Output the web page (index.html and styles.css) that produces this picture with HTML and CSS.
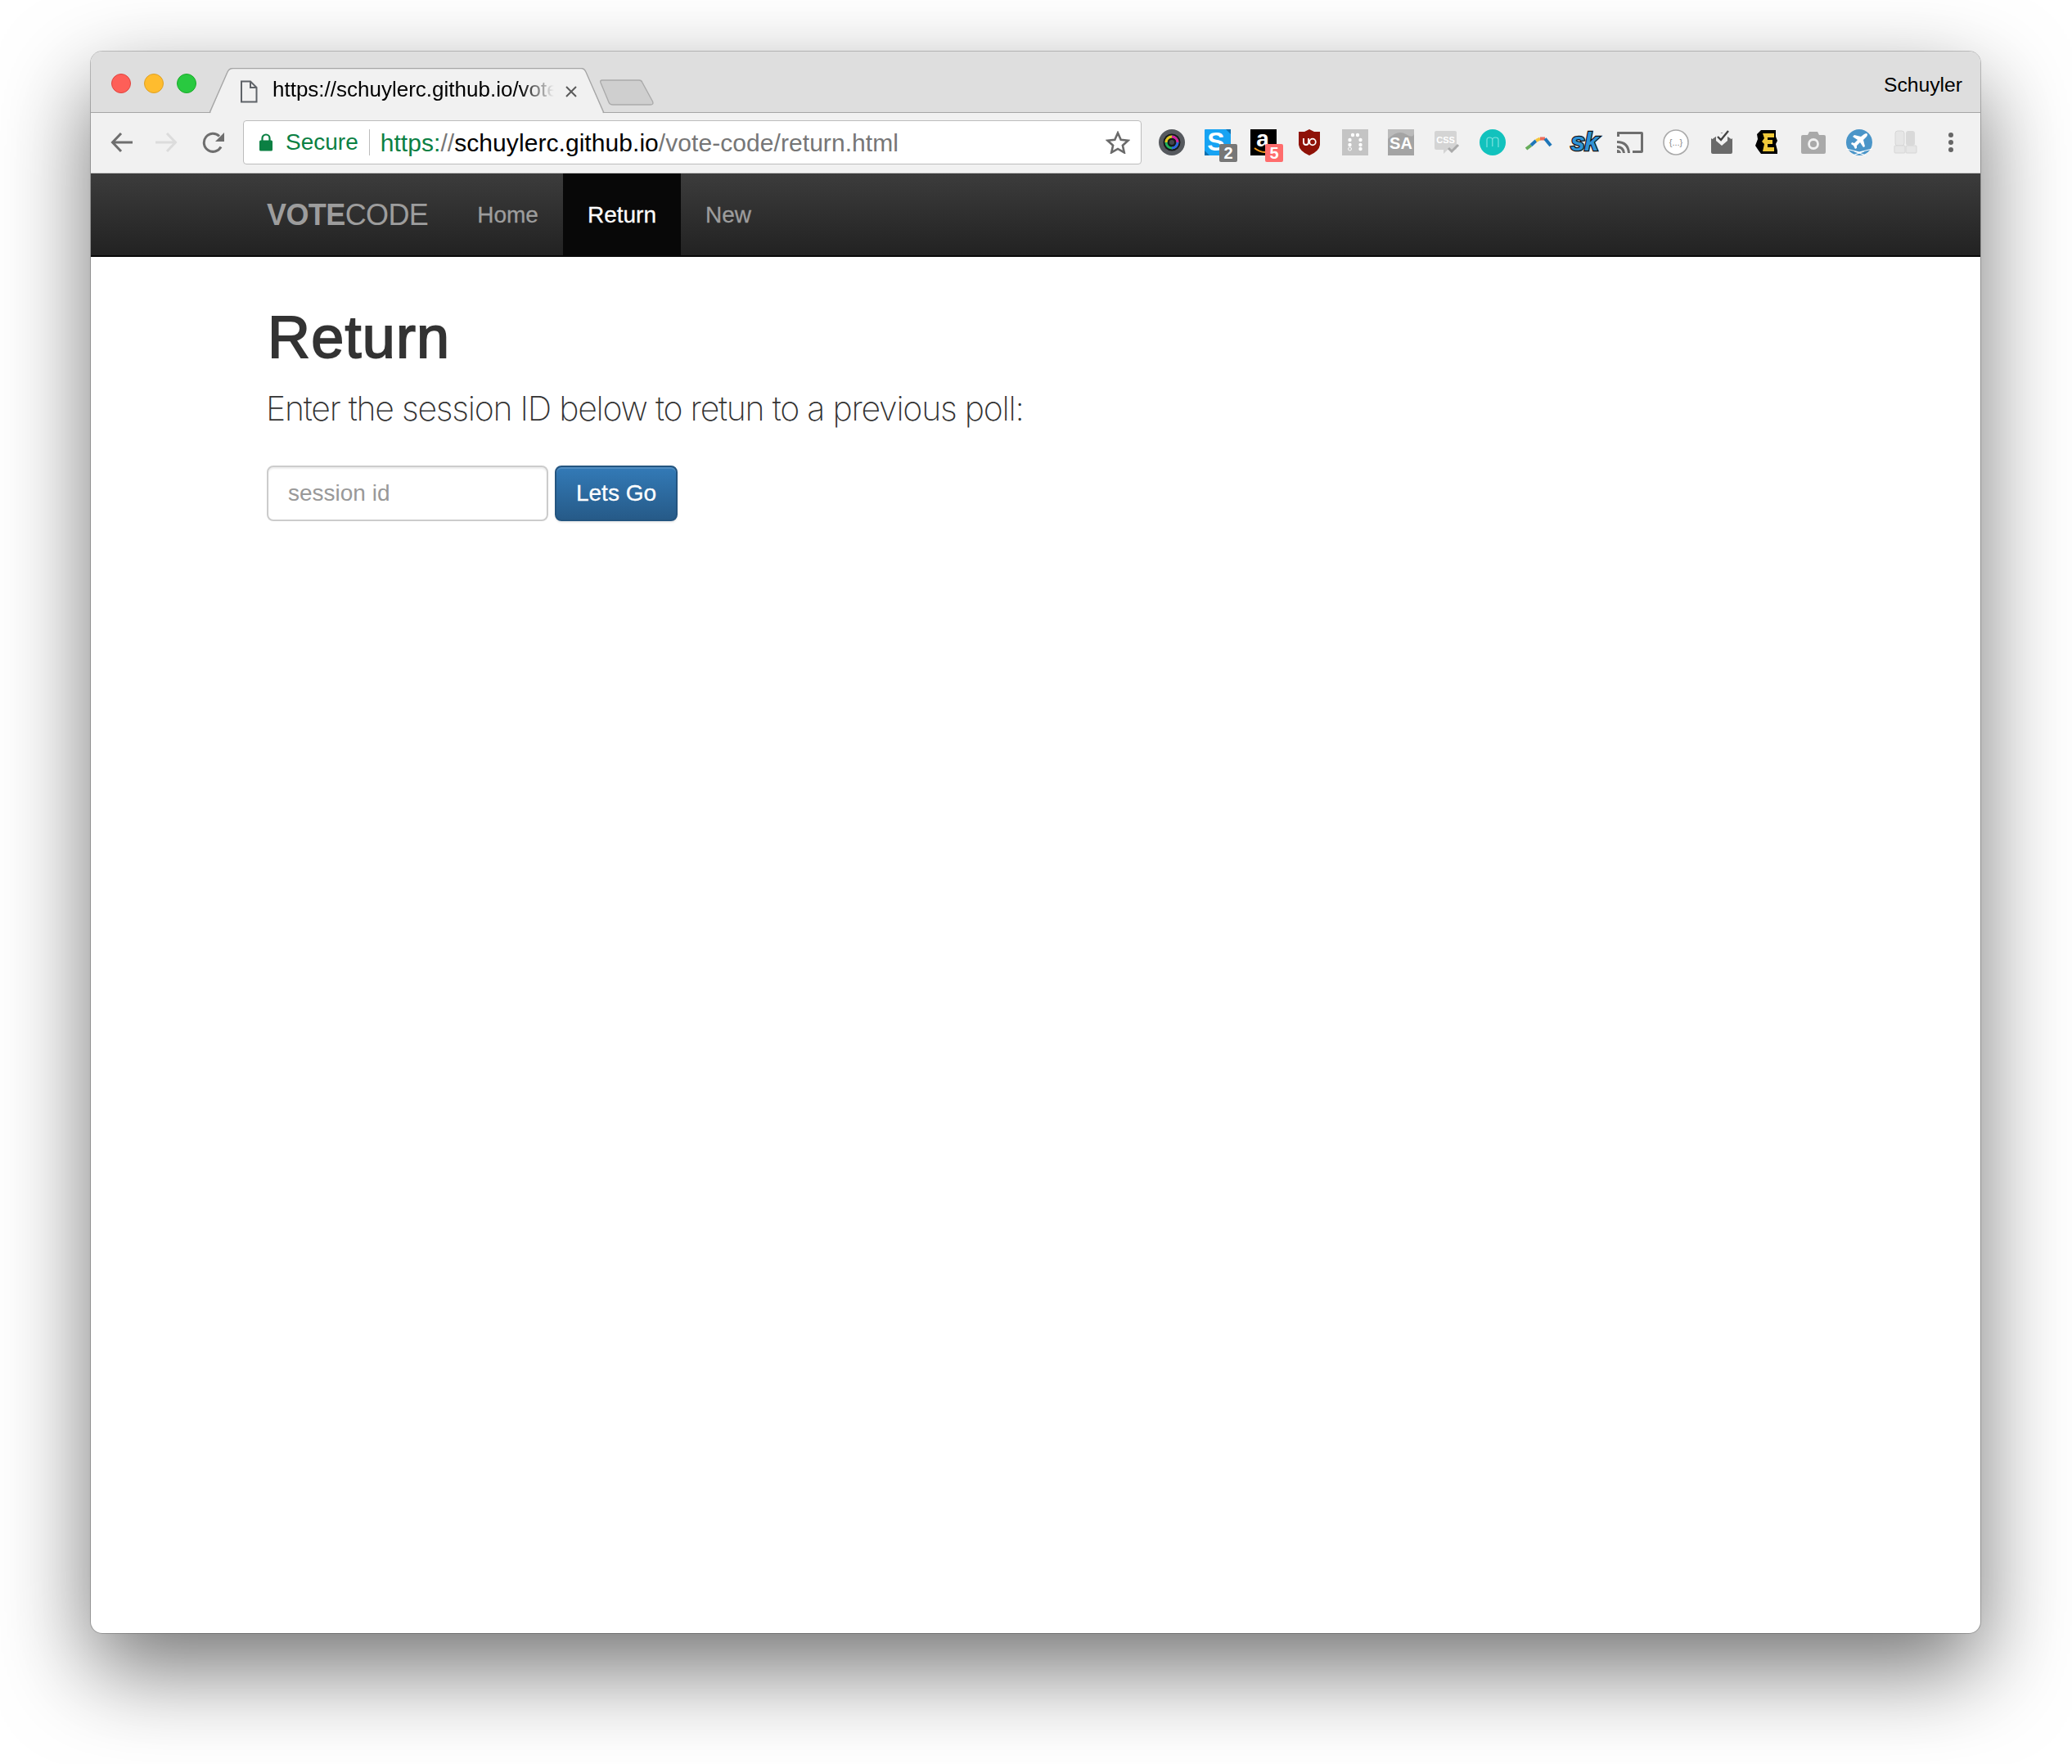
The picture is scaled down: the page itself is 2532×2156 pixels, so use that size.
FILE: index.html
```html
<!DOCTYPE html>
<html lang="en">
<head>
<meta charset="utf-8">
<title>VoteCode</title>
<link rel="stylesheet" href="styles.css">
</head>
<body>
<div class="window">
  <div class="tabstrip">
    <div class="lights">
      <span class="light red"></span><span class="light amber"></span><span class="light green"></span>
    </div>
    <div class="tab">
      <svg class="tab-shape" width="484" height="56" viewBox="0 0 484 56"><path d="M0 55.5H1L22 5Q24 .5 29 .5H454Q458 .5 460 5L481 55.5H484V56H0Z" fill="#f1f1f1"/><path d="M0 55L22 5Q24 .5 29 .5H454Q458 .5 460 5L482 55" fill="none" stroke="#a6a6a6" stroke-width="1.4"/></svg>
      <svg class="tab-icon" width="22" height="28" viewBox="0 0 22 28"><path d="M2 1.5H13L20.500 9V26.500H2ZM13 1.500V9H20.500" fill="none" stroke="#5f6368" stroke-width="2"/></svg>
      <span class="tab-title">https://schuylerc.github.io/vote-code/return.html</span>
      <svg class="tab-close" width="16" height="16" viewBox="0 0 16 16"><path d="M2 2L14 14M14 2L2 14" stroke="#5a5a5a" stroke-width="2"/></svg>
    </div>
    <svg class="newtab" width="66" height="32" viewBox="0 0 66 32"><path d="M3 1H48Q51 1 52 4L64.500 27Q66 31 62 31H16Q12 31 11 28L1 4Q0 1 3 1Z" fill="#cfcfcf" stroke="#ababab" stroke-width="1.400"/></svg>
    <span class="profile">Schuyler</span>
  </div>

  <div class="toolbar">
    <svg class="nav-icon" width="28" height="26" viewBox="0 0 28 26"><path d="M27 13H3M13 2L2.500 13L13 24" fill="none" stroke="#6e6e6e" stroke-width="3"/></svg>
    <svg class="nav-icon" width="28" height="26" viewBox="0 0 28 26"><path d="M1 13H25M15 2L25.500 13L15 24" fill="none" stroke="#dcdcdc" stroke-width="3"/></svg>
    <svg class="nav-icon" width="28" height="28" viewBox="0 0 28 28"><path d="M23 19.500A11 11 0 1 1 21 6.500" fill="none" stroke="#6e6e6e" stroke-width="3"/><path d="M27 2V13H16Z" fill="#6e6e6e"/></svg>

    <div class="omnibox">
      <svg class="lock" width="18" height="22" viewBox="0 0 18 22"><path d="M4.500 9V6A4.500 4.500 0 0 1 13.500 6V9" fill="none" stroke="#0b8043" stroke-width="2.200"/><rect x="1" y="8.500" width="16" height="13" rx="1.500" fill="#0b8043"/></svg>
      <span class="secure">Secure</span>
      <span class="url"><span class="scheme">https:</span><span class="path">//</span><span class="host">schuylerc.github.io</span><span class="path">/vote-code/return.html</span></span>
      <svg class="star" width="30" height="28" viewBox="0 0 30 28"><path d="M15 2.500L18.700 10.800L27.500 11.700L20.900 17.700L22.800 26.400L15 21.900L7.200 26.400L9.100 17.700L2.500 11.700L11.300 10.800Z" fill="none" stroke="#6a6a6a" stroke-width="2.600"/></svg>
    </div>

    <div class="extensions">
      <span class="ext"><svg width="32" height="32" viewBox="0 0 32 32"><circle cx="16" cy="16" r="16" fill="#56595e"/><circle cx="16" cy="16" r="10.500" fill="#17181a"/><g fill="none" stroke-width="3"><circle cx="16" cy="16" r="7" stroke="#1fb25a"/><path d="M16 9A7 7 0 0 1 23 16" stroke="#d71fa0"/><path d="M23 16A7 7 0 0 1 16 23" stroke="#2f63e0"/><path d="M9 16A7 7 0 0 1 16 9" stroke="#e7c21c"/></g><circle cx="16" cy="16" r="3" fill="#44484c"/></svg></span>
      <span class="ext"><svg width="40" height="40" viewBox="0 0 40 40" class="badged"><rect width="32" height="32" rx="1" fill="#17a3f3"/><path d="M26 0L32 6V32H6L0 26V32H32V0Z" fill="#0e6fae"/><text x="14" y="26" class="ico-bold s30 mid" fill="#fff">S</text><rect x="18" y="18" width="22" height="22" rx="2" fill="#777"/><text x="29" y="36" class="ico-bold s20 mid" fill="#fff">2</text></svg></span>
      <span class="ext"><svg width="40" height="40" viewBox="0 0 40 40" class="badged"><rect width="32" height="32" fill="#000"/><text x="15" y="21" class="ico-bold s28 mid" fill="#fff">a</text><path d="M5 23Q14 30 22 27" fill="none" stroke="#f19a1f" stroke-width="2"/><rect x="18" y="18" width="22" height="22" rx="2" fill="#ff6c6c"/><text x="29" y="36" class="ico-bold s20 mid" fill="#fff">5</text></svg></span>
      <span class="ext"><svg width="32" height="32" viewBox="0 0 32 32"><path d="M16 0L22 3H29V19Q28 27 16 32Q4 27 3 19V3H10Z" fill="#8f1208"/><path d="M9 11V16Q9 19 12 19T15 16V11" fill="none" stroke="#fff" stroke-width="1.800"/><circle cx="20" cy="15.500" r="3.800" fill="none" stroke="#fff" stroke-width="1.800"/></svg></span>
      <span class="ext"><svg width="32" height="32" viewBox="0 0 32 32"><rect width="32" height="32" fill="#c4c4c4"/><g fill="#fff"><circle cx="13" cy="7" r="2.200"/><circle cx="19" cy="7" r="2.200"/><circle cx="9.500" cy="13" r="2.200"/><circle cx="22.500" cy="13" r="2.200"/><circle cx="9.500" cy="19" r="2.200"/><circle cx="22.500" cy="19" r="2.200"/><circle cx="22.500" cy="24" r="2.200"/></g><circle cx="9.500" cy="24" r="2" fill="none" stroke="#fff"/></svg></span>
      <span class="ext"><svg width="32" height="32" viewBox="0 0 32 32"><rect width="32" height="32" fill="#a4a4a4"/><path d="M0 12Q12 0 22 6T32 4V0H0Z" fill="#bbb"/><text x="16" y="24" class="ico-bold s20 mid" fill="#fff">SA</text></svg></span>
      <span class="ext"><svg width="32" height="32" viewBox="0 0 32 32"><rect x="1" y="2" width="27" height="23" rx="2" fill="#d4d4d4"/><path d="M12 25H17L12 30Z" fill="#d4d4d4"/><text x="14.500" y="17" class="ico-bold s11 mid" fill="#fff">CSS</text><path d="M18 23L22 27L30 19" fill="none" stroke="#aaa" stroke-width="3"/></svg></span>
      <span class="ext"><svg width="32" height="32" viewBox="0 0 32 32"><circle cx="16" cy="16" r="16" fill="#12c2bd"/><path d="M9 22V13Q9 10 12.300 10T15.800 13V21M15.800 13Q15.800 10 19.500 10T23 13V22" fill="none" stroke="#7fe3df" stroke-width="1.200"/></svg></span>
      <span class="ext"><svg width="32" height="32" viewBox="0 0 32 32"><g fill="none" stroke-width="4"><path d="M1 24L7 19.500" stroke="#67ad5b"/><path d="M7 19.500L13 14" stroke="#1e76b8"/><path d="M13 14L18 11.500" stroke="#f5c33a"/><path d="M18 11.500L24 11.500" stroke="#ee6c5a"/><path d="M24 11.500L31 20" stroke="#1e76b8"/></g></svg></span>
      <span class="ext"><svg width="32" height="32" viewBox="0 0 32 32"><text x="16" y="26" class="ico-sk mid">sk</text></svg></span>
      <span class="ext"><svg width="32" height="32" viewBox="0 0 32 32"><path d="M0 3.500Q0 3 1 3H30Q32 3 32 5V27Q32 29 30 29H19V26H29V6H3V9H0Z" fill="#6e6e6e"/><path d="M0 14Q15 14 16 29H13Q12 17 0 17ZM0 20Q9 20 10 29H7Q6 23 0 23ZM0 25Q4 25 5 29H0Z" fill="#6e6e6e"/></svg></span>
      <span class="ext"><svg width="32" height="32" viewBox="0 0 32 32"><circle cx="16" cy="16" r="15" fill="#fff" stroke="#a9a9a9" stroke-width="1.600"/><text x="16" y="20" class="ico-reg s11 mid" fill="#8a8a8a">{...}</text></svg></span>
      <span class="ext"><svg width="32" height="32" viewBox="0 0 32 32"><path d="M3 13L16 4L29 13V28Q29 30 27 30H5Q3 30 3 28Z" fill="#6a6a6a"/><path d="M9 5H23V14L16 20L9 14Z" fill="#f1f1f1"/><path d="M3 13L16 23L29 13V11L16 21L3 11Z" fill="#6a6a6a"/><path d="M11 9L15 13L24 2" fill="none" stroke="#444" stroke-width="2.400"/></svg></span>
      <span class="ext"><svg width="32" height="32" viewBox="0 0 32 32"><path d="M8 1H26V9L28 14L26 18L28 26V30H8L5 26L1 20L4 12L3 6Z" fill="#000"/><path d="M10 5H24V10H16V13H22V18H16V22H24V27H10L12 18L9 15L12 11Z" fill="#f0c93a"/></svg></span>
      <span class="ext"><svg width="32" height="32" viewBox="0 0 32 32"><path d="M1 9Q1 7 3 7H9L11 3H21L23 7H29Q31 7 31 9V28Q31 30 29 30H3Q1 30 1 28Z" fill="#a9a9a9"/><circle cx="16" cy="18" r="5.500" fill="none" stroke="#f1f1f1" stroke-width="2.800"/></svg></span>
      <span class="ext"><svg width="32" height="32" viewBox="0 0 32 32"><circle cx="16" cy="16" r="16" fill="#4a95c8"/><path d="M25 5Q27 6 25 9L21 13L23 21L21 22L17 16L13 20V23L11 24L9 20L6 18L7 16L10 17L14 13L8 9L10 7L18 9L22 6Q24 5 25 5Z" fill="#fff"/><path d="M0 24L16 28L32 24M8 32L22 27M24 32L10 27" fill="none" stroke="#fff" stroke-width="1.200"/></svg></span>
      <span class="ext"><svg width="32" height="32" viewBox="0 0 32 32"><g fill="#e6e6e6" stroke="#d6d6d6"><rect x="4" y="2" width="11" height="18" rx="3"/><rect x="3" y="20" width="13" height="9" rx="1"/><rect x="17" y="20" width="13" height="9" rx="1"/></g><rect x="17" y="2" width="11" height="18" rx="3" fill="#d9d9d9"/></svg></span>
      <span class="ext"><svg width="32" height="32" viewBox="0 0 32 32"><g fill="#666"><circle cx="16" cy="7" r="3"/><circle cx="16" cy="16" r="3"/><circle cx="16" cy="25" r="3"/></g></svg></span>
    </div>
  </div>

  <nav class="navbar">
    <a class="brand"><b>VOTE</b>CODE</a>
    <a class="nav-link">Home</a>
    <a class="nav-link active">Return</a>
    <a class="nav-link">New</a>
  </nav>

  <main class="content">
    <h1 class="title">Return</h1>
    <p class="lead">Enter the session ID below to retun to a previous poll:</p>
    <form class="session-form">
      <input class="session-input" type="text" placeholder="session id">
      <button class="go" type="button">Lets Go</button>
    </form>
  </main>
</div>
</body>
</html>
```
FILE: styles.css
```css
* { box-sizing: border-box; }
html, body { margin: 0; padding: 0; background: #fff; }
body { height: 2156px; overflow: hidden; font-family: "Liberation Sans", Arial, sans-serif; padding: 63px 112px 0 111px; }

.window {
  display: flex;
  flex-direction: column;
  height: 1933px;
  border-radius: 14px;
  background: #fff;
  overflow: hidden;
  box-shadow: 0 44px 110px rgba(0,0,0,.55), 0 0 0 1px rgba(0,0,0,.22);
}
.tabstrip {
  position: relative;
  display: flex;
  align-items: flex-end;
  height: 75px;
  flex: none;
  background: #dedede;
  border-bottom: 1px solid #a6a6a6;
}
.lights { display: flex; gap: 16px; align-self: flex-start; padding: 27px 0 0 25px; width: 145px; }
.light { width: 24px; height: 24px; border-radius: 50%; border: 1px solid; flex: none; }
.red { background: #fe5f58; border-color: #e0443e; }
.amber { background: #ffbc2e; border-color: #dea123; }
.green { background: #29c940; border-color: #1aab29; }

.tab {
  position: relative;
  width: 484px;
  height: 55px;
  margin-bottom: -1px;
  display: flex;
  align-items: center;
  flex: none;
}
.tab-shape { position: absolute; left: 0; top: 0; }
.tab-icon { position: relative; margin-left: 37px; margin-top: 2px; }
.tab-title {
  position: relative;
  top: -1px;
  margin-left: 18px;
  width: 344px;
  overflow: hidden;
  white-space: nowrap;
  font-size: 26px;
  color: #000;
  -webkit-mask-image: linear-gradient(to right, #000 88%, transparent 100%);
  mask-image: linear-gradient(to right, #000 88%, transparent 100%);
}
.tab-close { position: relative; margin-left: 13px; margin-top: 2px; }
.newtab { align-self: flex-start; margin: 34px 0 0 -7px; }
.profile { margin-left: auto; align-self: flex-start; margin-top: 27px; margin-right: 22px; font-size: 24.700px; color: #000; }

.toolbar {
  display: flex;
  align-items: center;
  height: 74px;
  flex: none;
  padding: 0 8px 1px 0;
  background: #f1f1f1;
  border-bottom: 1px solid #c9c9c9;
}
.nav-icon { flex: none; margin-left: 24px; margin-right: 4px; }
.nav-icon + .nav-icon { margin-left: 22px; }
.nav-icon + .nav-icon + .nav-icon { margin-left: 26px; }
.omnibox {
  display: flex;
  align-items: center;
  width: 1098px;
  height: 54px;
  margin-left: 18px;
  flex: none;
  background: #fff;
  border: 1px solid #bcbcbc;
  border-radius: 4px;
}
.lock { margin-left: 18px; flex: none; }
.secure { margin-left: 15px; padding-right: 13px; font-size: 28px; color: #0b8043; border-right: 1px solid #bcbcbc; line-height: 32px; }
.url { margin-left: 13px; font-size: 30px; letter-spacing: .06px; white-space: nowrap; position: relative; top: 1px; }
.scheme { color: #0b8043; }
.host { color: #000; }
.path { color: #767676; }
.star { margin-left: auto; margin-right: 13px; }
.extensions { display: flex; margin-left: 9px; }
.ext { width: 56px; height: 32px; display: flex; justify-content: center; flex: none; }
.ext svg { overflow: visible; flex: none; }
.ext .badged { margin-right: -8px; }
.ico-bold { font-family: "Liberation Sans", sans-serif; font-weight: 700; }
.ico-reg { font-family: "Liberation Sans", sans-serif; }
.ico-sk { font-family: "Liberation Sans", sans-serif; font-weight: 700; font-style: italic; font-size: 32px; letter-spacing: -1px; fill: #2f93d6; stroke: #111; stroke-width: 2.500px; paint-order: stroke; }
.mid { text-anchor: middle; }
.s30 { font-size: 32px; }
.s28 { font-size: 28px; }
.s20 { font-size: 20px; }
.s11 { font-size: 11px; }

.navbar {
  display: flex;
  align-items: stretch;
  height: 102px;
  flex: none;
  padding-left: 185px;
  background: linear-gradient(to bottom, #3c3c3c, #222);
  border-bottom: 2px solid #080808;
  font-size: 28px;
}
.brand { padding: 0 30px; line-height: 102px; font-size: 36px; letter-spacing: -.6px; color: #9d9d9d; }
.nav-link { padding: 0 30px; line-height: 101px; color: #9d9d9d; -webkit-text-stroke: .3px currentColor; }
.nav-link.active { color: #fff; background: #080808; }

.content { display: flex; flex-direction: column; align-items: flex-start; padding: 59px 0 0 214px; flex: 1; color: #333; }
.title { margin: 0 0 0 2px; font-size: 72px; line-height: 79px; font-weight: 400; letter-spacing: 1.200px; -webkit-text-stroke: 1.800px #333; }
.lead { margin: 17px 0 0; font-family: Inter, Roboto, "Liberation Sans", sans-serif; font-weight: 200; font-size: 41px; letter-spacing: -1.240px; line-height: 60px; white-space: nowrap; }
.session-form { display: flex; gap: 8px; margin: 40px 0 0 1px; }
.session-input {
  width: 344px;
  height: 68px;
  padding: 0 24px;
  font: 28px "Liberation Sans", Arial, sans-serif;
  color: #555;
  background: #fff;
  border: 2px solid #ccc;
  border-radius: 8px;
  box-shadow: inset 0 2px 2px rgba(0,0,0,.075);
  outline: none;
}
.session-input::placeholder { color: #999; opacity: 1; }
.go {
  width: 150px;
  height: 68px;
  padding: 0;
  font: 28px "Liberation Sans", Arial, sans-serif;
  color: #fff;
  background: linear-gradient(to bottom, #337ab7, #265a88);
  border: 2px solid #245580;
  border-radius: 8px;
  -webkit-text-stroke: .3px #fff;
  box-shadow: inset 0 2px 0 rgba(255,255,255,.15), 0 2px 2px rgba(0,0,0,.075);
}
```
